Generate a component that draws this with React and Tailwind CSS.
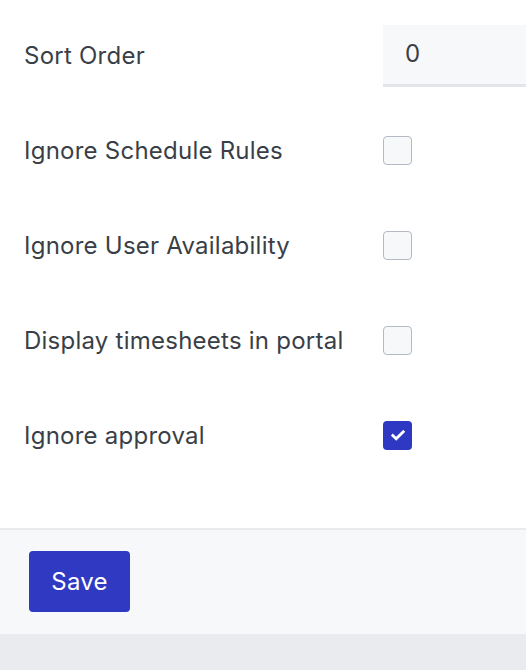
import { useState } from "react";

const rows = [
  { key: "schedule", label: "Ignore Schedule Rules", checked: false },
  { key: "availability", label: "Ignore User Availability", checked: false },
  { key: "portal", label: "Display timesheets in portal", checked: false },
  { key: "approval", label: "Ignore approval", checked: true },
];

function Checkbox({ checked, onChange }) {
  return (
    <button
      type="button"
      onClick={onChange}
      className={
        checked
          ? "flex h-[29px] w-[29px] items-center justify-center rounded-[4px] bg-[#2f38c3]"
          : "flex h-[29px] w-[29px] items-center justify-center rounded-[4px] border-[1.5px] border-[#b4bac3] bg-[#f7f8fa]"
      }
    >
      {checked && (
        <svg width="14" height="11" viewBox="0 0 14 11" fill="none">
          <path d="M1.8 5.6 5.2 8.8 12.2 1.8" stroke="white" strokeWidth="2.8" strokeLinecap="square" />
        </svg>
      )}
    </button>
  );
}

export default function App() {
  const [values, setValues] = useState(
    Object.fromEntries(rows.map((r) => [r.key, r.checked]))
  );

  return (
    <div className="min-h-[670px] bg-[#eaebef] font-['Inter',sans-serif] text-[24px] tracking-[0.01em] text-[#3a3f47]">
      <div className="bg-white pb-[45px] pl-[24px] pt-[8px]">
        <div className="flex h-[95px] items-center">
          <div className="w-[359px]">Sort Order</div>
          <div className="flex h-[62px] flex-1 items-center border-b-[3px] border-[#e3e5ea] bg-[#f7f8fa] pl-[22px]">
            0
          </div>
        </div>
        {rows.map((row) => (
          <div key={row.key} className="flex h-[95px] items-center">
            <div className="w-[359px]">{row.label}</div>
            <Checkbox
              checked={values[row.key]}
              onChange={() => setValues((v) => ({ ...v, [row.key]: !v[row.key] }))}
            />
          </div>
        ))}
      </div>
      <div className="h-[106px] border-t-2 border-[#e8eaee] bg-[#f7f8fa] pl-[29px] pt-[21px]">
        <button
          type="button"
          className="h-[61px] w-[101px] rounded-[4px] bg-[#2f39c2] text-[24px] text-white"
        >
          Save
        </button>
      </div>
    </div>
  );
}
